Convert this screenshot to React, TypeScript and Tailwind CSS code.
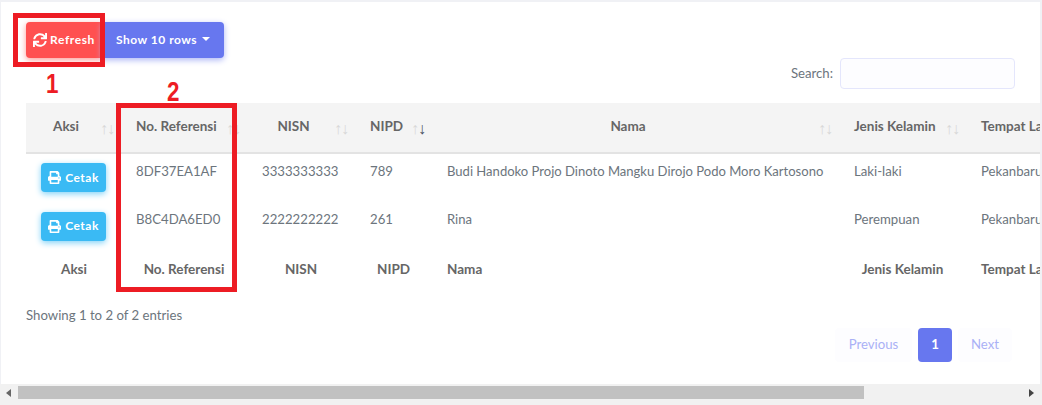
import { FaPrint, FaSync } from "react-icons/fa"

interface Column {
  label: string
  width: string
  active?: boolean
}

const columns: Column[] = [
  { label: "Aksi", width: "w-[90px]" },
  { label: "No. Referensi", width: "w-[126px]" },
  { label: "NISN", width: "w-[108px]" },
  { label: "NIPD", width: "w-[77px]", active: true },
  { label: "Nama", width: "w-[407px]" },
  { label: "Jenis Kelamin", width: "w-[127px]" },
  { label: "Tempat Lahir", width: "w-[130px]" },
]

const rows = [
  ["8DF37EA1AF", "3333333333", "789", "Budi Handoko Projo Dinoto Mangku Dirojo Podo Moro Kartosono", "Laki-laki", "Pekanbaru"],
  ["B8C4DA6ED0", "2222222222", "261", "Rina", "Perempuan", "Pekanbaru"],
]

const CetakButton = () => (
  <button className="flex h-[29px] w-[65px] items-center justify-center gap-[4px] rounded-[4px] bg-[#3abaf4] text-[12px] font-bold tracking-[0.5px] text-white shadow-[0_2px_6px_#82d3f8]">
    <FaPrint className="h-[13px] w-[13px]" />
    Cetak
  </button>
)

const SortArrows = ({ active }: { active?: boolean }) => (
  <span className="absolute right-[1px] top-[18px] flex font-['Liberation_Sans',sans-serif] text-[16px] leading-[16px] font-normal">
    <span className="text-[#d8d8d8]">↑</span>
    <span className={active ? "-ml-[1px] text-[#4a5260]" : "-ml-[1px] text-[#d8d8d8]"}>↓</span>
  </span>
)

export default function App() {
  return (
    <div className="flex h-[405px] w-[1042px] flex-col overflow-hidden bg-[#f0f1f5] font-['Lato',sans-serif] text-[13.2px] text-[#6c757d]">
      <div className="relative ml-[1px] mr-[2px] mt-[2px] h-[382px] overflow-hidden bg-white pl-[25px]">
        <div className="flex pt-[20px]">
          <button className="flex h-[36px] w-[76px] items-center justify-center gap-[3px] rounded-l-[4px] bg-[#ff5050] text-[12px] font-bold tracking-[0.6px] text-white shadow-[0_2px_6px_#fd9b96]">
            <FaSync className="h-[14px] w-[14px]" />
            Refresh
          </button>
          <button className="flex h-[36px] w-[122px] items-center justify-center gap-[5px] rounded-r-[4px] bg-[#6777ef] text-[12px] font-bold tracking-[0.5px] text-white shadow-[0_2px_6px_#acb5f6]">
            Show 10 rows
            <span className="mb-[3px] border-x-[4px] border-t-[4px] border-x-transparent border-t-white" />
          </button>
        </div>

        <div className="flex items-center justify-end pr-[25px]">
          <label className="mr-[7px]">Search:</label>
          <input className="h-[31px] w-[175px] rounded-[4px] border border-[#e4e6fc] bg-[#fdfdff]" />
        </div>

        <table className="mt-[14px] w-[1065px] table-fixed border-collapse">
          <thead>
            <tr className="h-[50px] border-b-2 border-[#e3e3e3] bg-[#f4f4f4] text-[13.5px] text-[#666]">
              {columns.map((col, i) => (
                <th key={col.label} className={`${col.width} relative ${i === 0 ? "pl-[15px]" : "pl-[20px]"} pb-[3px] pr-[25px] font-bold whitespace-nowrap ${col.label === "No. Referensi" || col.label === "Jenis Kelamin" || col.label === "Tempat Lahir" ? "text-left" : "text-center"}`}>
                  {col.label}
                  <SortArrows active={col.active} />
                </th>
              ))}
            </tr>
          </thead>
          <tbody>
            {rows.map((row) => (
              <tr key={row[0]} className="h-[49px]">
                <td className="pl-[15px] pb-[1px]">
                  <CetakButton />
                </td>
                {row.map((cell, i) => (
                  <td key={i} className={`whitespace-nowrap pb-[13px] pl-[20px] ${i === 3 ? "text-[13.05px]" : ""}`}>
                    {cell}
                  </td>
                ))}
              </tr>
            ))}
          </tbody>
          <tfoot>
            <tr className="h-[36px] text-[13.5px] text-[#666]">
              {columns.map((col, i) => (
                <th key={col.label} className={`${i === 0 ? "pl-[16px]" : "pl-[20px]"} pr-[10px] font-bold whitespace-nowrap ${col.label === "Nama" || col.label === "Tempat Lahir" ? "text-left" : "text-center"}`}>
                  {col.label}
                </th>
              ))}
            </tr>
          </tfoot>
        </table>

        <div className="mt-[18px] leading-[20px]">Showing 1 to 2 of 2 entries</div>

        <div className="mr-[28px] mt-[3px] flex justify-end gap-[6px]">
          <span className="flex h-[34px] w-[77px] items-center justify-center rounded-[4px] bg-[#fdfdff] text-[#aab1f6]">Previous</span>
          <span className="flex h-[34px] w-[34px] items-center justify-center rounded-[4px] bg-[#6777ef] font-bold text-white">1</span>
          <span className="flex h-[34px] w-[54px] items-center justify-center rounded-[4px] bg-[#fdfdff] text-[#aab1f6]">Next</span>
        </div>

        {/* annotations drawn over the screenshot */}
        <div className="absolute left-[12px] top-[11px] h-[54px] w-[92px] border-[5px] border-[#ed1c24]" />
        <div className="absolute left-[115px] top-[101px] h-[189px] w-[121px] border-[5px] border-[#ed1c24]" />
        <span className="absolute left-[45px] top-[61px] origin-left scale-x-[0.8] font-['Liberation_Sans',sans-serif] text-[28px] font-bold text-[#ed1c24]">1</span>
        <span className="absolute left-[166px] top-[69px] origin-left scale-x-[0.8] font-['Liberation_Sans',sans-serif] text-[28px] font-bold text-[#ed1c24]">2</span>
      </div>

      <div className="flex h-[21px] w-full items-start bg-[#f1f1f1] pt-[2px]">
        <span className="ml-[6px] mr-[7px] mt-[3px] h-0 w-0 border-y-[4px] border-r-[5px] border-y-transparent border-r-[#666]" />
        <div className="h-[13px] w-[846px] bg-[#c1c1c1]" />
        <span className="ml-[165px] mt-[3px] h-0 w-0 border-y-[4px] border-l-[5px] border-y-transparent border-l-[#444]" />
      </div>
    </div>
  )
}
